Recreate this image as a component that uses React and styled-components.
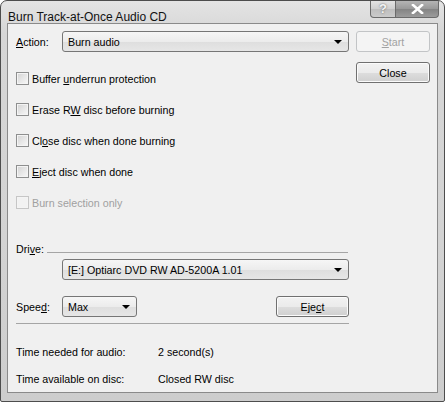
import React from "react";
import styled, { createGlobalStyle } from "styled-components";

const GlobalStyle = createGlobalStyle`
  html, body {
    margin: 0;
    padding: 0;
    background: #ffffff;
  }
  body {
    font-family: "Liberation Sans", Arial, sans-serif;
    font-size: 10.7px;
    color: #000;
  }
`;

const Window = styled.div`
  box-sizing: border-box;
  width: 445px;
  height: 402px;
  display: flex;
  flex-direction: column;
  border: 1px solid #4d4d4d;
  border-radius: 7px 7px 2px 2px;
  background: linear-gradient(180deg, #e4e4e4 0%, #d6d6d6 8%, #d3d3d3 60%, #cdcdcd 100%);
  padding: 0 6px 9px 6px;
  overflow: hidden;
`;

const TitleBar = styled.div`
  height: 27px;
  display: flex;
  align-items: flex-start;
  justify-content: space-between;
`;

const Title = styled.div`
  font-size: 12px;
  line-height: 12px;
  padding: 10px 0 0 1px;
  color: #111;
`;

const Caption = styled.div`
  display: flex;
  margin-top: -1px;
  margin-right: -1px;
`;

const CapButton = styled.div`
  box-sizing: border-box;
  height: 18px;
  width: ${({ w }) => w}px;
  display: flex;
  align-items: center;
  justify-content: center;
  border: 1px solid #6b6b6b;
  border-top: none;
  border-radius: ${({ first }) => (first ? "0 0 0 4px" : "0 0 4px 0")};
  background: ${({ dark }) =>
    dark
      ? "linear-gradient(180deg, #b8b8b8 0%, #9a9a9a 50%, #828282 51%, #9c9c9c 100%)"
      : "linear-gradient(180deg, #e6e6e6 0%, #d0d0d0 50%, #bdbdbd 51%, #cbcbcb 100%)"};
  color: ${({ dark }) => (dark ? "#fff" : "#f4f4f4")};
  font-size: 13px;
  font-weight: bold;
  text-shadow: 0 0 2px #555;
  & + & {
    border-left: none;
  }
`;

const Client = styled.div`
  flex: 1;
  box-sizing: border-box;
  background: #f0f0f0;
  border: 1px solid #8a8a8a;
  padding: 7px 0 0 8px;
  display: flex;
  flex-direction: column;
`;

const Top = styled.div`
  display: grid;
  grid-template-columns: 333px 74px;
  column-gap: 7px;
`;

const Left = styled.div`
  display: flex;
  flex-direction: column;
`;

const Right = styled.div`
  display: flex;
  flex-direction: column;
  gap: 10px;
`;

const Row = styled.div`
  display: flex;
  align-items: center;
  height: ${({ h }) => h || 21}px;
`;

const Label = styled.span`
  width: ${({ w }) => w || 46}px;
  flex: none;
`;

const U = styled.span`
  text-decoration: underline;
`;

const Combo = styled.div`
  box-sizing: border-box;
  width: ${({ w }) => w}px;
  height: 21px;
  margin-left: ${({ ml }) => ml || 0}px;
  display: flex;
  align-items: center;
  justify-content: space-between;
  padding: 0 5px 0 5px;
  border: 1px solid #767676;
  border-radius: 3px;
  background: linear-gradient(180deg, #f6f6f6 0%, #ececec 50%, #dedede 51%, #e6e6e6 100%);
`;

const Arrow = styled.span`
  width: 0;
  height: 0;
  border-left: 4px solid transparent;
  border-right: 4px solid transparent;
  border-top: 4px solid #000;
  margin-right: 1px;
`;

const Button = styled.div`
  box-sizing: border-box;
  width: ${({ w }) => w || 74}px;
  height: 21px;
  display: flex;
  align-items: center;
  justify-content: center;
  border: 1px solid ${({ disabled }) => (disabled ? "#c2c4c6" : "#707070")};
  border-radius: 3px;
  color: ${({ disabled }) => (disabled ? "#a2a2a2" : "#000")};
  background: ${({ disabled }) =>
    disabled
      ? "#f4f4f4"
      : "linear-gradient(180deg, #f2f2f2 0%, #ebebeb 50%, #dddddd 51%, #cfcfcf 100%)"};
  box-shadow: ${({ disabled }) => (disabled ? "none" : "inset 0 0 0 1px #fbfbfb")};
`;

const Checks = styled.div`
  display: flex;
  flex-direction: column;
  margin-top: 11px;
`;

const Check = styled.div`
  display: flex;
  align-items: center;
  height: 31px;
  color: ${({ disabled }) => (disabled ? "#a0a0a0" : "#000")};
`;

const Box = styled.span`
  box-sizing: border-box;
  width: 13px;
  height: 13px;
  margin-right: 3px;
  border: 1px solid ${({ disabled }) => (disabled ? "#c6c6c6" : "#8e8f8f")};
  background: ${({ disabled }) =>
    disabled ? "#f2f2f2" : "linear-gradient(135deg, #d2d2d2 0%, #e6e6e6 50%, #f8f8f8 100%)"};
  box-shadow: inset 0 0 0 1px #f4f4f4;
`;

const GroupHead = styled.div`
  display: flex;
  align-items: center;
  margin-top: 24px;
  width: 332px;
  height: 14px;
`;

const HeadLine = styled.span`
  flex: 1;
  height: 1px;
  background: #a5a5a5;
  margin: 6px 0 0 3px;
`;

const DriveRow = styled.div`
  margin-top: 3px;
`;

const SpeedRow = styled.div`
  display: flex;
  align-items: center;
  margin-top: 16px;
  width: 333px;
  height: 21px;
`;

const Spacer = styled.span`
  flex: 1;
`;

const Separator = styled.div`
  width: 333px;
  height: 1px;
  background: #a5a5a5;
  margin-top: 6px;
`;

const Info = styled.div`
  display: flex;
  flex-direction: column;
  margin-top: 14px;
`;

const InfoRow = styled.div`
  display: flex;
  align-items: center;
  height: 27px;
`;

const InfoLabel = styled.span`
  width: 142px;
`;

const checks = [
  { pre: "Buffer ", u: "u", post: "nderrun protection" },
  { pre: "Erase R", u: "W", post: " disc before burning" },
  { pre: "Cl", u: "o", post: "se disc when done burning" },
  { pre: "", u: "E", post: "ject disc when done" },
  { pre: "Burn selection only", u: "", post: "", disabled: true },
];

export default function App() {
  return (
    <>
      <GlobalStyle />
      <Window>
        <TitleBar>
          <Title>Burn Track-at-Once Audio CD</Title>
          <Caption>
            <CapButton w={26} first>?</CapButton>
            <CapButton w={43} dark>
              <svg width="13" height="10" viewBox="0 0 13 10">
                <path d="M2 1 L11 9 M11 1 L2 9" stroke="#fff" strokeWidth="2.6" strokeLinecap="square" />
              </svg>
            </CapButton>
          </Caption>
        </TitleBar>
        <Client>
          <Top>
            <Left>
              <Row>
                <Label>
                  <U>A</U>ction:
                </Label>
                <Combo w={287}>
                  <span>Burn audio</span>
                  <Arrow />
                </Combo>
              </Row>
              <Checks>
                {checks.map((c, i) => (
                  <Check key={i} disabled={c.disabled}>
                    <Box disabled={c.disabled} />
                    <span>
                      {c.pre}
                      {c.u && <U>{c.u}</U>}
                      {c.post}
                    </span>
                  </Check>
                ))}
              </Checks>
            </Left>
            <Right>
              <Button disabled>
                <span>
                  <U>S</U>tart
                </span>
              </Button>
              <Button>Close</Button>
            </Right>
          </Top>

          <GroupHead>
            <span>
              Dri<U>v</U>e:
            </span>
            <HeadLine />
          </GroupHead>
          <DriveRow>
            <Combo w={287} ml={46}>
              <span>[E:] Optiarc DVD RW AD-5200A 1.01</span>
              <Arrow />
            </Combo>
          </DriveRow>
          <SpeedRow>
            <Label>
              Spee<U>d</U>:
            </Label>
            <Combo w={75}>
              <span>Max</span>
              <Arrow />
            </Combo>
            <Spacer />
            <Button w={73}>
              <span>
                Eje<U>c</U>t
              </span>
            </Button>
          </SpeedRow>
          <Separator />

          <Info>
            <InfoRow>
              <InfoLabel>Time needed for audio:</InfoLabel>
              <span>2 second(s)</span>
            </InfoRow>
            <InfoRow>
              <InfoLabel>Time available on disc:</InfoLabel>
              <span>Closed RW disc</span>
            </InfoRow>
          </Info>
        </Client>
      </Window>
    </>
  );
}
